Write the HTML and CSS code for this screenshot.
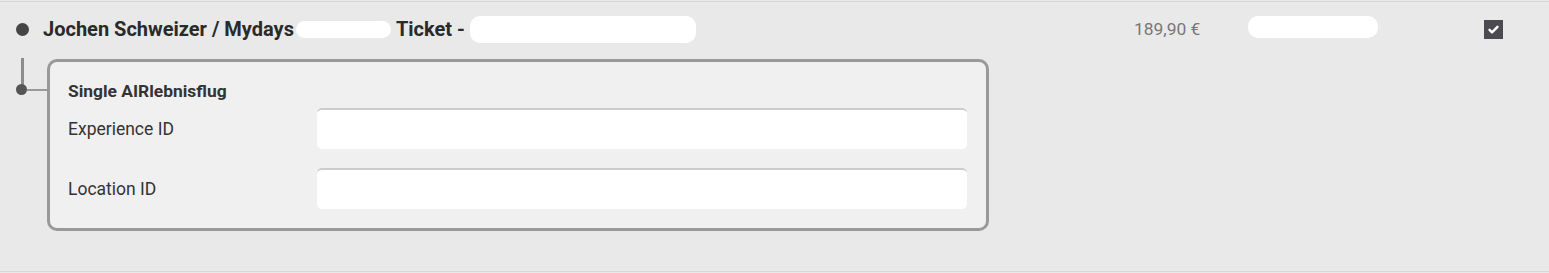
FILE: index.html
```html
<!DOCTYPE html>
<html lang="de">
<head>
<meta charset="utf-8">
<title>Ticket</title>
<link rel="stylesheet" href="styles.css">
</head>
<body>
<div class="item">
  <div class="head">
    <span class="bullet"></span>
    <div class="title">
      <span>Jochen Schweizer / Mydays</span><span class="blob blob-a"></span><span>Ticket -</span><span class="blob blob-b"></span>
    </div>
    <div class="price">189,90 €</div>
    <div class="status"><span class="blob blob-c"></span></div>
    <div class="check">
      <svg width="19" height="19" viewBox="0 0 19 19"><rect width="19" height="19" fill="#4a4a50"/><path d="M5.5 9.8 L8 12.3 L13.5 6.8" fill="none" stroke="#fff" stroke-width="2.4" stroke-linecap="round" stroke-linejoin="round"/></svg>
    </div>
  </div>
  <div class="sub">
    <div class="connector">
      <span class="vline"></span>
      <span class="joint"><span class="dot"></span><span class="hline"></span></span>
    </div>
    <div class="card">
      <div class="card-title">Single AIRlebnisflug</div>
      <div class="field">
        <label class="label" for="exp">Experience ID</label>
        <input class="input" id="exp" type="text">
      </div>
      <div class="field">
        <label class="label" for="loc">Location ID</label>
        <input class="input" id="loc" type="text">
      </div>
    </div>
  </div>
</div>
</body>
</html>
```

FILE: styles.css
```css
* { box-sizing: border-box; }
html, body { margin: 0; padding: 0; }
body {
  background: #e9e9e9;
  font-family: Roboto, "Liberation Sans", sans-serif;
  color: #333;
  padding-top: 1px;
}
.item {
  border-top: 1px solid #d6d6d6;
  border-bottom: 1px solid #d6d6d6;
  height: 271px;
  padding: 0 0 0 16px;
}
.head {
  display: flex;
  align-items: center;
  height: 54px;
}
.bullet {
  width: 13px;
  height: 13px;
  border-radius: 50%;
  background: #454545;
  flex: none;
}
.title {
  display: flex;
  align-items: center;
  margin-left: 14px;
  width: 1091px;
  font-weight: 700;
  font-size: 20px;
  color: #2a2a2a;
}
.blob { display: inline-block; background: #fff; border-radius: 10px; }
.blob-a { width: 95px; height: 17px; margin: 0 5px 0 2px; }
.blob-b { width: 226px; height: 27px; margin-left: 5px; }
.price {
  width: 114px;
  font-size: 17.4px;
  color: #777;
}
.status { width: 236px; }
.blob-c { width: 130px; height: 22px; }
.check { display: flex; }
.check svg { display: block; }
.sub {
  display: flex;
}
.connector {
  display: flex;
  flex-direction: column;
  width: 31px;
  padding-top: 2px;
}
.vline {
  width: 3px;
  height: 30px;
  background: #8c8c8c;
  margin-left: 5px;
}
.joint { display: flex; align-items: center; margin-top: -4px; }
.dot {
  width: 11px;
  height: 11px;
  border-radius: 50%;
  background: #555;
  flex: none;
}
.hline { width: 20px; height: 2px; background: #999; }
.card {
  width: 942px;
  height: 172px;
  margin-top: 3px;
  border: 3px solid #999;
  border-radius: 10px;
  background: #f0f0f0;
  padding: 18px 19px 0 18px;
}
.card-title {
  font-weight: 700;
  font-size: 17.4px;
  color: #333;
  line-height: 22px;
  margin-bottom: 6px;
}
.field {
  display: flex;
  align-items: center;
  margin-bottom: 19px;
}
.label {
  width: 249px;
  font-size: 17.5px;
  color: #333;
}
.input {
  width: 650px;
  height: 41px;
  border: 0;
  border-top: 2px solid #ccc;
  border-radius: 5px;
  background: #fff;
  outline: none;
}
```
